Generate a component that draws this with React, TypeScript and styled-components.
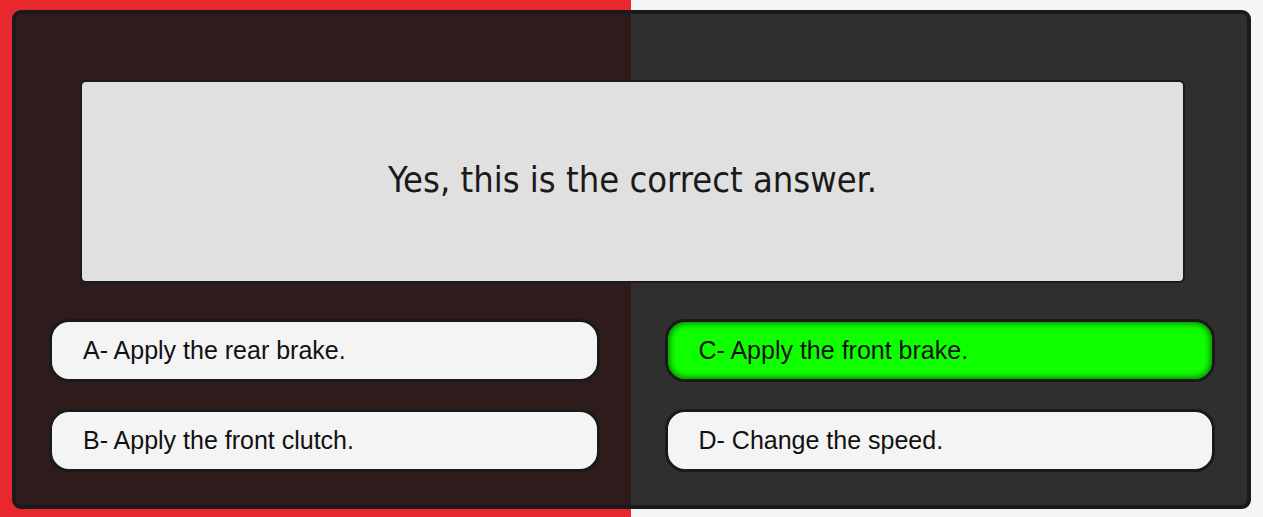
import React from "react";
import styled, { createGlobalStyle } from "styled-components";

const Global = createGlobalStyle`
  html, body { margin: 0; padding: 0; }
  body {
    background: linear-gradient(to right, #e8282f 0, #e8282f 50%, #f5f5f5 50%, #f5f5f5 100%);
    font-family: "Liberation Sans", Arial, sans-serif;
  }
`;

const Page = styled.div`
  box-sizing: border-box;
  height: 517px;
  padding: 10px 12px 8px 12px;
  display: flex;
`;

const Panel = styled.div`
  box-sizing: border-box;
  flex: 1;
  background: rgba(26, 26, 26, 0.9);
  border: 4px solid #1a1a1a;
  border-radius: 9px;
  padding: 66px 32px 33px 33px;
  display: flex;
  flex-direction: column;
  gap: 36px;
`;

const Question = styled.div`
  box-sizing: border-box;
  flex: none;
  margin: 0 30px 0 31px;
  height: 203px;
  background: #e0e0e0;
  border: 2px solid #1a1a1a;
  border-radius: 6px;
  display: flex;
  align-items: center;
  justify-content: center;
  color: #1a1a1a;
  font-family: "DejaVu Sans", sans-serif;
  font-stretch: condensed;
  font-size: 36px;
  padding-bottom: 4px;
`;

const Answers = styled.div`
  flex: none;
  display: grid;
  grid-template-columns: 1fr 1fr;
  grid-auto-rows: 63px;
  column-gap: 65px;
  row-gap: 27px;
`;

const Answer = styled.div<{ $correct?: boolean }>`
  box-sizing: border-box;
  border: 3px solid #1a1a1a;
  border-radius: 20px;
  background: ${(p) => (p.$correct ? "#10ff00" : "#f4f4f4")};
  box-shadow: ${(p) => (p.$correct ? "inset 0 0 7px 1px rgba(0,0,0,0.6)" : "none")};
  display: flex;
  align-items: center;
  padding-left: 31px;
  font-family: "Liberation Sans", Arial, sans-serif;
  font-size: 25px;
  color: #111;
`;

export default function App() {
  return (
    <>
      <Global />
      <Page>
        <Panel>
          <Question>Yes, this is the correct answer.</Question>
          <Answers>
            <Answer>A- Apply the rear brake.</Answer>
            <Answer $correct>C- Apply the front brake.</Answer>
            <Answer>B- Apply the front clutch.</Answer>
            <Answer>D- Change the speed.</Answer>
          </Answers>
        </Panel>
      </Page>
    </>
  );
}
